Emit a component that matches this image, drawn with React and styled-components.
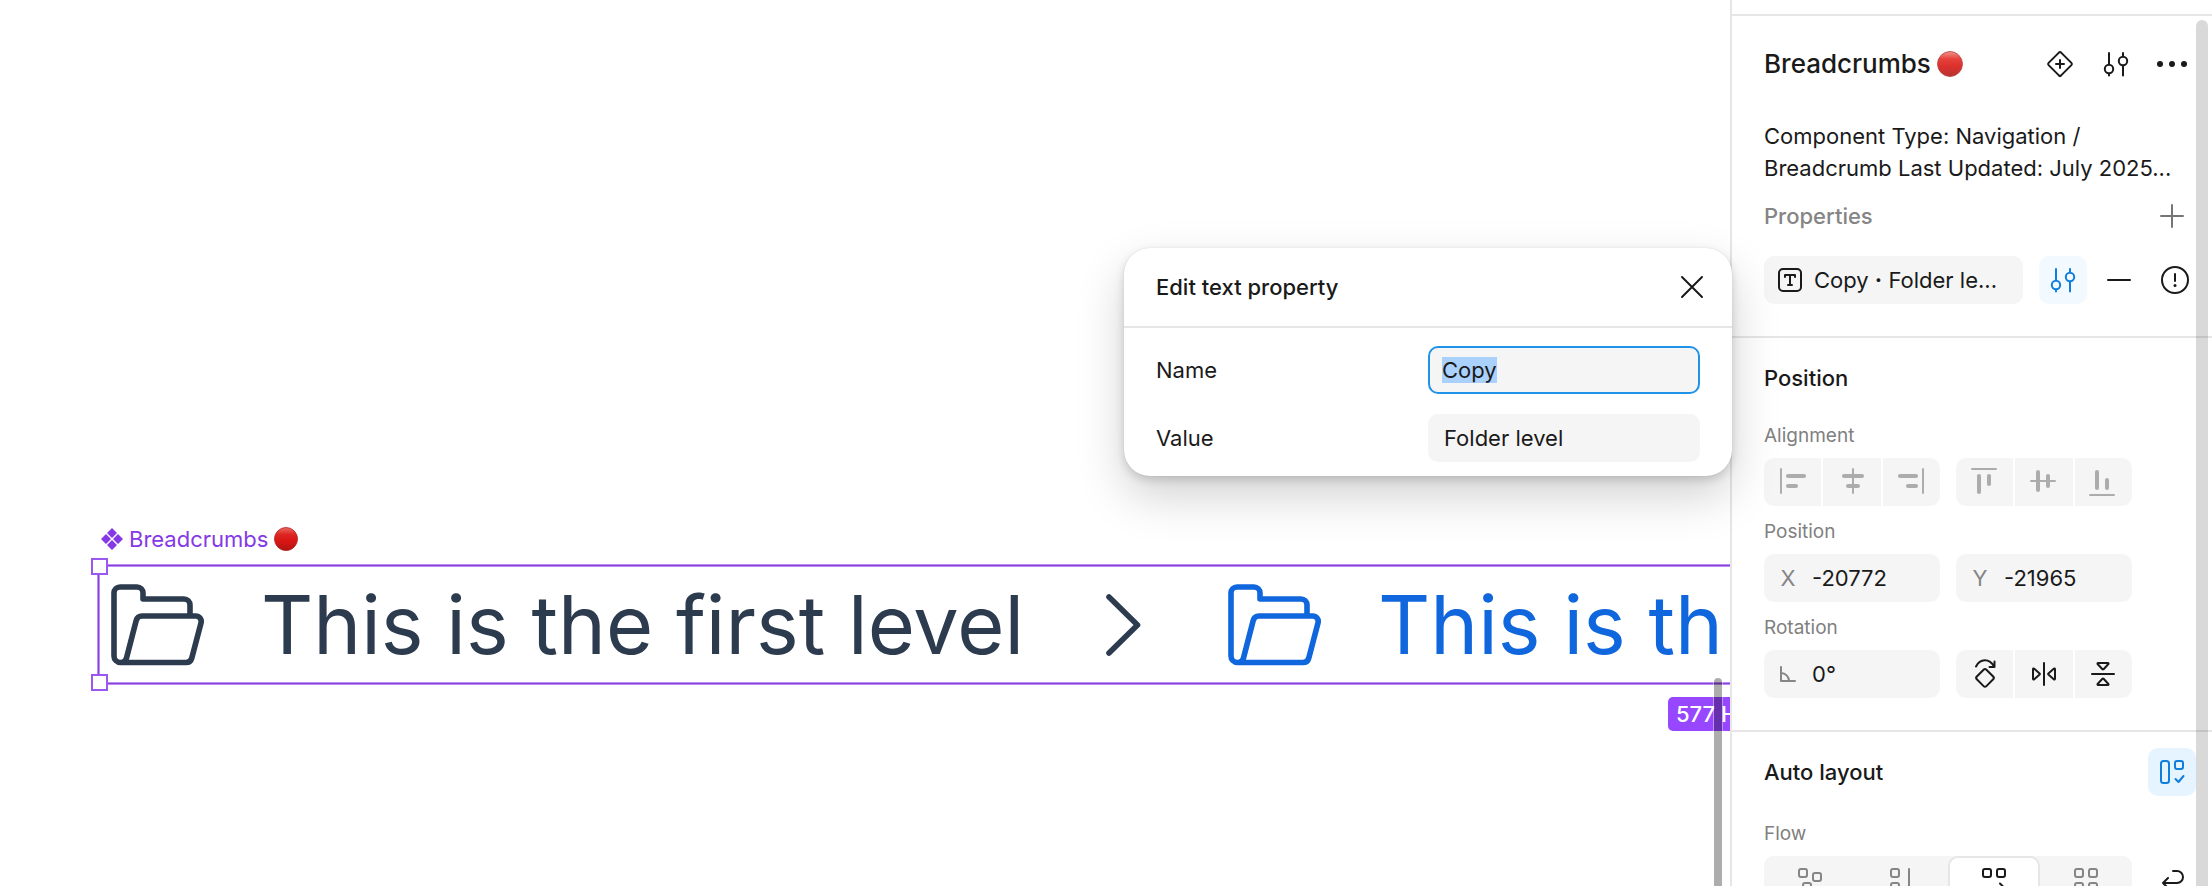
import React, { useEffect, useRef } from "react";
import styled, { createGlobalStyle, css } from "styled-components";

const GlobalStyle = createGlobalStyle`
  * { box-sizing: border-box; }
  body {
    margin: 0;
    background: #fff;
    color: #1a1a1a;
    font: 400 22px/32px Inter, "Liberation Sans", sans-serif;
  }
  button, input { font: inherit; color: inherit; }
  h2, h3, p { margin: 0; }
  svg { display: block; flex: none; }
`;

const Editor = styled.div`
  position: relative;
  display: flex;
  height: 100vh;
  overflow: hidden;
`;

/* ---------- canvas ---------- */

const Canvas = styled.main`
  position: relative;
  flex: 1;
  min-width: 0;
  overflow: hidden;
`;

const LayerLabel = styled.div`
  position: absolute;
  left: 101px;
  top: 523px;
  display: flex;
  align-items: center;
  gap: 6px;
  color: #8638e5;
`;

const Frame = styled.div`
  position: absolute;
  left: 98px;
  top: 565px;
  display: flex;
  align-items: center;
  gap: 60px;
  width: 2400px;
  height: 119px;
  padding-left: 12px;
  border: 1px solid #8644d2;
  box-shadow: 0 0 0 1px #bb8bf8, inset 0 0 0 1px #bb8bf8;
`;

const Crumb = styled.div`
  display: flex;
  align-items: center;
  gap: 56px;
  color: ${(p) => (p.$link ? "#1066dc" : "#2d3b4f")};
  font-size: 81px;
  line-height: 96px;
  white-space: nowrap;
`;

const Separator = styled.div`
  display: flex;
  padding: 0 27px 0 22px;
  color: #2d3b4f;
`;

const Handle = styled.span`
  position: absolute;
  left: -8px;
  ${(p) => (p.$bottom ? "bottom: -8px;" : "top: -8px;")}
  width: 17px;
  height: 17px;
  border: 2px solid #9a58ee;
  background: #fff;
`;

const SizeBadge = styled.div`
  position: absolute;
  left: 1668px;
  top: 697px;
  height: 34px;
  padding: 0 8px;
  border-radius: 5px;
  background: #9747ff;
  color: #fff;
  font-weight: 500;
  line-height: 34px;
  white-space: nowrap;
`;

const CanvasScrollbar = styled.div`
  position: absolute;
  right: 8px;
  top: 678px;
  bottom: 0;
  width: 8px;
  border-radius: 4px 4px 0 0;
  background: rgba(0, 0, 0, 0.32);
  box-shadow: 0 0 0 1px rgba(255, 255, 255, 0.4);
`;

/* ---------- dialog ---------- */

const Dialog = styled.section`
  position: absolute;
  right: 480px;
  top: 248px;
  width: 608px;
  border-radius: 26px;
  background: #fff;
  box-shadow: 0 0 1px rgba(0, 0, 0, 0.16), 0 4px 10px rgba(0, 0, 0, 0.15),
    0 20px 48px rgba(0, 0, 0, 0.18);
`;

const DialogHeader = styled.header`
  display: flex;
  align-items: center;
  justify-content: space-between;
  height: 80px;
  padding: 0 16px 0 32px;
  border-bottom: 2px solid #e6e6e6;
`;

const DialogBody = styled.div`
  display: grid;
  gap: 20px;
  padding: 18px 32px 14px;
`;

const DialogField = styled.div`
  display: grid;
  grid-template-columns: 1fr 272px;
  align-items: center;
`;

const TextInput = styled.input`
  width: 100%;
  height: 48px;
  padding: 0 14px;
  border: 2px solid #f5f5f5;
  border-radius: 10px;
  outline: none;
  background: #f5f5f5;
  &:focus { padding: 0 12px; border-color: #1f93e8; }
  &::selection { background: rgba(168, 208, 252, 0.99); color: #1a1a1a; }
`;

/* ---------- properties panel ---------- */

const Panel = styled.aside`
  position: relative;
  flex: none;
  width: 482px;
  border-left: 2px solid #e6e6e6;
  background: #fff;
  overflow: hidden;
`;

const PanelTop = styled.div`
  height: 16px;
  border-bottom: 2px solid #e6e6e6;
`;

const Section = styled.section`
  padding: ${(p) => (p.$first ? "24px" : "0")} 16px 32px 32px;
  border-bottom: 2px solid #e6e6e6;
`;

const Row = styled.div`
  display: flex;
  align-items: center;
  justify-content: space-between;
`;

const TitleRow = styled(Row)`
  margin-bottom: 32px;
`;

const Title = styled.h2`
  display: flex;
  align-items: center;
  gap: 6px;
  font-size: 26px;
  font-weight: 550;
`;

const Heading = styled.h3`
  font-size: 22px;
  font-weight: 550;
`;

const SectionHead = styled(Row)`
  height: 80px;
`;

const PropertiesLabel = styled.h3`
  font-size: 22px;
  font-weight: 500;
  color: #858585;
`;

const PropertiesRow = styled(Row)`
  margin: 8px 0 16px;
`;

const Actions = styled.div`
  display: flex;
  gap: 8px;
`;

const IconButton = styled.button`
  display: flex;
  align-items: center;
  justify-content: center;
  flex: none;
  width: 48px;
  height: 48px;
  padding: 0;
  border: 0;
  border-radius: 10px;
  background: ${(p) => p.$bg || "transparent"};
  color: ${(p) => p.$color || "#1a1a1a"};
`;

const PropertyRow = styled.div`
  display: flex;
  gap: 16px;
  margin-right: -3px;
`;

const PropertyChip = styled.button`
  display: flex;
  align-items: center;
  flex: 1;
  min-width: 0;
  height: 48px;
  padding: 0 20px 0 14px;
  border: 0;
  border-radius: 10px;
  background: #f5f5f5;
  gap: 12px;
  white-space: nowrap;
`;

const Dot = styled.span`
  font-weight: 700;
`;

const Grid = styled.div`
  display: grid;
  grid-template-columns: repeat(2, minmax(0, 1fr)) 48px;
  column-gap: 16px;
  & + & { margin-top: 8px; }
`;

const FieldLabel = styled.label`
  grid-column: 1 / -1;
  height: ${(p) => (p.$tall ? "44px" : "40px")};
  padding-top: ${(p) => (p.$tall ? "12px" : "8px")};
  font-size: 19px;
  line-height: 20px;
  color: #808080;
`;

const NumberField = styled.div`
  display: flex;
  align-items: center;
  height: 48px;
  border-radius: 10px;
  background: #f5f5f5;
`;

const Prefix = styled.label`
  display: flex;
  justify-content: center;
  flex: none;
  width: 48px;
  color: #858585;
`;

const NumberInput = styled.input`
  flex: 1;
  min-width: 0;
  padding: 0;
  border: 0;
  outline: none;
  background: transparent;
`;

const Segments = styled.div`
  display: grid;
  grid-auto-flow: column;
  grid-auto-columns: minmax(0, 1fr);
  gap: 2px;
  height: 48px;
  border-radius: 10px;
  overflow: hidden;
`;

const segment = css`
  display: flex;
  align-items: center;
  justify-content: center;
  min-width: 0;
  padding: 0;
  border: 0;
  background: #f5f5f5;
`;

const Segment = styled.button`
  ${segment}
  color: ${(p) => (p.$muted ? "#acacac" : "#1a1a1a")};
`;

const FlowGroup = styled.div`
  grid-column: 1 / 3;
  display: grid;
  grid-template-columns: repeat(4, 1fr);
  height: 48px;
  border-radius: 10px;
  background: #f5f5f5;
`;

const FlowOption = styled.button`
  ${segment}
  height: 48px;
  border-radius: 10px;
  color: #858585;
  ${(p) =>
    p.$active &&
    css`
      border: 2px solid #e6e6e6;
      background: #fff;
      color: #1a1a1a;
    `}
`;

const PanelScrollbar = styled.div`
  position: absolute;
  top: 20px;
  right: 4px;
  bottom: 0;
  width: 12px;
  border-radius: 6px 6px 0 0;
  background: rgba(0, 0, 0, 0.15);
`;

/* ---------- drawings ---------- */

const Glyph = ({ children, width = 2 }) => (
  <svg
    width="48"
    height="48"
    viewBox="0 0 48 48"
    fill="none"
    stroke="currentColor"
    strokeWidth={width}
    strokeLinecap="round"
    strokeLinejoin="round"
    aria-hidden="true"
  >
    {children}
  </svg>
);

const Bar = (props) => <rect rx="2" fill="currentColor" stroke="none" {...props} />;
const Tile = (props) => <rect width="8" height="8" rx="2" {...props} />;

const RedDot = ({ size, id, soft }) => (
  <svg width={size} height={size} viewBox="0 0 24 24" role="img" aria-label="Red circle">
    <defs>
      <linearGradient id={id} x1="0" y1="0" x2="0" y2="1">
        <stop offset="0" stopColor={soft ? "#f0958c" : "#ec6a64"} />
        <stop offset="0.3" stopColor={soft ? "#e6413a" : "#dd2721"} />
        <stop offset="0.6" stopColor={soft ? "#dc302d" : "#d81614"} />
        <stop offset="1" stopColor={soft ? "#b53532" : "#ae1512"} />
      </linearGradient>
    </defs>
    <circle cx="12" cy="12" r="11.5" fill={`url(#${id})`} stroke={soft ? "#b94642" : "#b3211d"} strokeWidth="0.8" />
  </svg>
);

const Folder = () => (
  <svg
    width="94"
    height="82"
    viewBox="0 0 94 82"
    fill="none"
    stroke="currentColor"
    strokeWidth="5.6"
    strokeLinejoin="round"
    aria-hidden="true"
  >
    <path d="M79 32V21a6 6 0 0 0-6-6H32V9a6 6 0 0 0-6-6H9a6 6 0 0 0-6 6V72a6.500 6.500 0 0 0 6.500 6.500H75a6 6 0 0 0 5.800-4.500L90 39a5.500 5.500 0 0 0-5.500-7H31a6 6 0 0 0-5.800 4.500L15.500 74a6 6 0 0 1-5 4.500" />
  </svg>
);

const Chevron = () => (
  <svg
    width="35"
    height="62"
    viewBox="0 0 35 62"
    fill="none"
    stroke="currentColor"
    strokeWidth="5.600"
    strokeLinecap="round"
    strokeLinejoin="round"
    aria-hidden="true"
  >
    <path d="M3 3L31.500 31L3 59" />
  </svg>
);

const ComponentMark = () => (
  <svg width="22" height="22" viewBox="0 0 22 22" fill="currentColor" aria-hidden="true">
    <path d="M11 0l5 5-5 5-5-5zM11 12l5 5-5 5-5-5zM5 6l5 5-5 5-5-5zM17 6l5 5-5 5-5-5z" />
  </svg>
);

const Adjust = () => (
  <Glyph>
    <path d="M17 13V24M17 34V35.500M31 13V16M31 26V35.500" />
    <circle cx="17" cy="29" r="4.200" />
    <circle cx="31" cy="21" r="4.200" />
  </Glyph>
);

const ALIGN_X = [
  ["Align left", <><path d="M12 11V35" /><Bar x="17" y="16" width="20" height="4" /><Bar x="17" y="26" width="12" height="4" /></>],
  ["Align horizontal centers", <><path d="M25 11V35" /><Bar x="14" y="16" width="22" height="4" /><Bar x="18" y="26" width="14" height="4" /></>],
  ["Align right", <><path d="M36 11V35" /><Bar x="11" y="16" width="20" height="4" /><Bar x="19" y="26" width="12" height="4" /></>],
];

const ALIGN_Y = [
  ["Align top", <><path d="M11 11H35" /><Bar x="16" y="16" width="4" height="20" /><Bar x="26" y="16" width="4" height="12" /></>],
  ["Align vertical centers", <><path d="M11 23H35" /><Bar x="16" y="12" width="4" height="22" /><Bar x="26" y="16" width="4" height="14" /></>],
  ["Align bottom", <><path d="M11 37H35" /><Bar x="16" y="12" width="4" height="20" /><Bar x="26" y="20" width="4" height="12" /></>],
];

const TRANSFORMS = [
  ["Rotate 90° right", <><path d="M22.600 19.700a2 2 0 0 1 2.800 0l6.800 6.800a2 2 0 0 1 0 2.800l-6.800 6.800a2 2 0 0 1-2.800 0l-6.800-6.800a2 2 0 0 1 0-2.800zM15 16.500C19 8.500 28.500 8 33 16.500M33.500 11.500V17H28.500" /></>],
  ["Flip horizontal", <><path d="M24 13V35M13 19v10a.6.6 0 0 0 1 .4l5.600-4.800a.8.8 0 0 0 0-1.200L14 18.600a.6.6 0 0 0-1 .4zM35 19v10a.6.6 0 0 1-1 .4l-5.600-4.800a.8.8 0 0 1 0-1.200L34 18.600a.6.6 0 0 1 1 .4z" /></>],
  ["Flip vertical", <><path d="M13 24H35M19 13h10a.6.6 0 0 1 .4 1l-4.800 5.200a.8.8 0 0 1-1.200 0L18.600 14a.6.6 0 0 1 .4-1zM19 35h10a.6.6 0 0 0 .4-1l-4.800-5.200a.8.8 0 0 0-1.200 0L18.600 34a.6.6 0 0 0 .4 1z" /></>],
];

const FLOWS = [
  ["Freeform", <><Tile x="13" y="13" /><Tile x="27" y="17" /><Tile x="17" y="27" /></>],
  ["Vertical", <><Tile x="13" y="13" /><Tile x="13" y="27" /><path d="M31 13V35" /></>],
  ["Horizontal with wrap", <><Tile x="13" y="13" /><Tile x="27" y="13" /><path d="M30 27.500L35 32.500L30 37.500M35 32.500H13" /></>],
  ["Grid", <><Tile x="13" y="13" /><Tile x="27" y="13" /><Tile x="13" y="27" /><Tile x="27" y="27" /></>],
];

const SegmentGroup = ({ items, label, muted }) => (
  <Segments role="group" aria-label={label}>
    {items.map(([name, art]) => (
      <Segment key={name} aria-label={name} $muted={muted}>
        <Glyph>{art}</Glyph>
      </Segment>
    ))}
  </Segments>
);

/* ---------- page ---------- */

function EditTextProperty() {
  const nameRef = useRef(null);
  useEffect(() => {
    nameRef.current.focus();
    nameRef.current.select();
  }, []);
  return (
    <Dialog role="dialog" aria-labelledby="dialog-title">
      <DialogHeader>
        <Heading id="dialog-title">Edit text property</Heading>
        <IconButton aria-label="Close">
          <Glyph><path d="M14 14L34 34M34 14L14 34" /></Glyph>
        </IconButton>
      </DialogHeader>
      <DialogBody>
        <DialogField>
          <label htmlFor="prop-name">Name</label>
          <TextInput id="prop-name" ref={nameRef} defaultValue="Copy" />
        </DialogField>
        <DialogField>
          <label htmlFor="prop-value">Value</label>
          <TextInput id="prop-value" defaultValue="Folder level" />
        </DialogField>
      </DialogBody>
    </Dialog>
  );
}

export default function App() {
  return (
    <Editor>
      <GlobalStyle />
      <Canvas>
        <LayerLabel>
          <ComponentMark />
          <span>Breadcrumbs</span>
          <RedDot size={24} id="dot-layer" />
        </LayerLabel>
        <Frame>
          <Crumb>
            <Folder />
            <span>This is the first level</span>
          </Crumb>
          <Separator><Chevron /></Separator>
          <Crumb $link>
            <Folder />
            <span>This is th</span>
          </Crumb>
          <Handle />
          <Handle $bottom />
        </Frame>
        <SizeBadge>577 H</SizeBadge>
        <CanvasScrollbar />
      </Canvas>

      <Panel>
        <PanelTop />
        <Section $first>
          <TitleRow>
            <Title>
              Breadcrumbs
              <RedDot size={26} id="dot-panel" soft />
            </Title>
            <Actions>
              <IconButton aria-label="Component">
                <Glyph>
                  <path d="M22.900 12.600a1.600 1.600 0 0 1 2.200 0l10.300 10.300a1.600 1.600 0 0 1 0 2.200L25.100 35.400a1.600 1.600 0 0 1-2.200 0L12.600 25.100a1.600 1.600 0 0 1 0-2.200zM24 20V28M20 24H28" />
                </Glyph>
              </IconButton>
              <IconButton aria-label="Configure"><Adjust /></IconButton>
              <IconButton aria-label="More">
                <Glyph>
                  <g fill="currentColor" stroke="none">
                    <circle cx="12" cy="24" r="3" />
                    <circle cx="24" cy="24" r="3" />
                    <circle cx="36" cy="24" r="3" />
                  </g>
                </Glyph>
              </IconButton>
            </Actions>
          </TitleRow>
          <p>
            Component Type: Navigation /<br />
            Breadcrumb Last Updated: July 2025...
          </p>
          <PropertiesRow>
            <PropertiesLabel>Properties</PropertiesLabel>
            <IconButton aria-label="Add property" $color="#757575">
              <Glyph><path d="M24 13V35M13 24H35" /></Glyph>
            </IconButton>
          </PropertiesRow>
          <PropertyRow>
            <PropertyChip>
              <svg width="24" height="24" viewBox="0 0 24 24" fill="none" stroke="currentColor" strokeWidth="2" strokeLinecap="round" strokeLinejoin="round" aria-hidden="true">
                <rect x="1" y="1" width="22" height="22" rx="4" />
                <path d="M7 9V7H17V9M12 7V17M10 17H14" />
              </svg>
              <span>Copy <Dot>·</Dot> Folder le...</span>
            </PropertyChip>
            <Actions>
              <IconButton aria-label="Edit property" $bg="#f2f9ff" $color="#0f7fdd"><Adjust /></IconButton>
              <IconButton aria-label="Remove property">
                <Glyph><path d="M13 24H35" /></Glyph>
              </IconButton>
              <IconButton aria-label="Property warning">
                <Glyph>
                  <circle cx="24" cy="24" r="13" />
                  <path d="M24 18V25" />
                  <circle cx="24" cy="29.500" r="1.500" fill="currentColor" stroke="none" />
                </Glyph>
              </IconButton>
            </Actions>
          </PropertyRow>
        </Section>

        <Section>
          <SectionHead><Heading>Position</Heading></SectionHead>
          <Grid>
            <FieldLabel as="span">Alignment</FieldLabel>
            <SegmentGroup items={ALIGN_X} label="Horizontal alignment" muted />
            <SegmentGroup items={ALIGN_Y} label="Vertical alignment" muted />
          </Grid>
          <Grid>
            <FieldLabel as="span">Position</FieldLabel>
            <NumberField>
              <Prefix htmlFor="pos-x">X</Prefix>
              <NumberInput id="pos-x" defaultValue="-20772" />
            </NumberField>
            <NumberField>
              <Prefix htmlFor="pos-y">Y</Prefix>
              <NumberInput id="pos-y" defaultValue="-21965" />
            </NumberField>
          </Grid>
          <Grid>
            <FieldLabel htmlFor="rotation">Rotation</FieldLabel>
            <NumberField>
              <Prefix as="span">
                <Glyph><path d="M17 17V31H31M17 23a8 8 0 0 1 8 8" /></Glyph>
              </Prefix>
              <NumberInput id="rotation" defaultValue="0°" />
            </NumberField>
            <SegmentGroup items={TRANSFORMS} label="Rotate and flip" />
          </Grid>
        </Section>

        <Section>
          <SectionHead>
            <Heading>Auto layout</Heading>
            <IconButton aria-label="Toggle auto layout" $bg="#e5f4ff" $color="#0f7fdd">
              <Glyph>
                <rect x="13" y="13" width="8" height="22" rx="2.500" />
                <Tile x="27" y="13" />
                <path d="M27.500 31L30.500 34L35.500 28" />
              </Glyph>
            </IconButton>
          </SectionHead>
          <Grid>
            <FieldLabel as="span" $tall>Flow</FieldLabel>
            <FlowGroup role="group" aria-label="Flow">
              {FLOWS.map(([name, art], i) => (
                <FlowOption key={name} aria-label={name} $active={i === 2}>
                  <Glyph>{art}</Glyph>
                </FlowOption>
              ))}
            </FlowGroup>
            <IconButton aria-label="Wrap">
              <Glyph><path d="M25 15H29a6 6 0 0 1 0 12H15M20 22L15 27L20 32" /></Glyph>
            </IconButton>
          </Grid>
        </Section>
        <PanelScrollbar />
      </Panel>

      <EditTextProperty />
    </Editor>
  );
}
